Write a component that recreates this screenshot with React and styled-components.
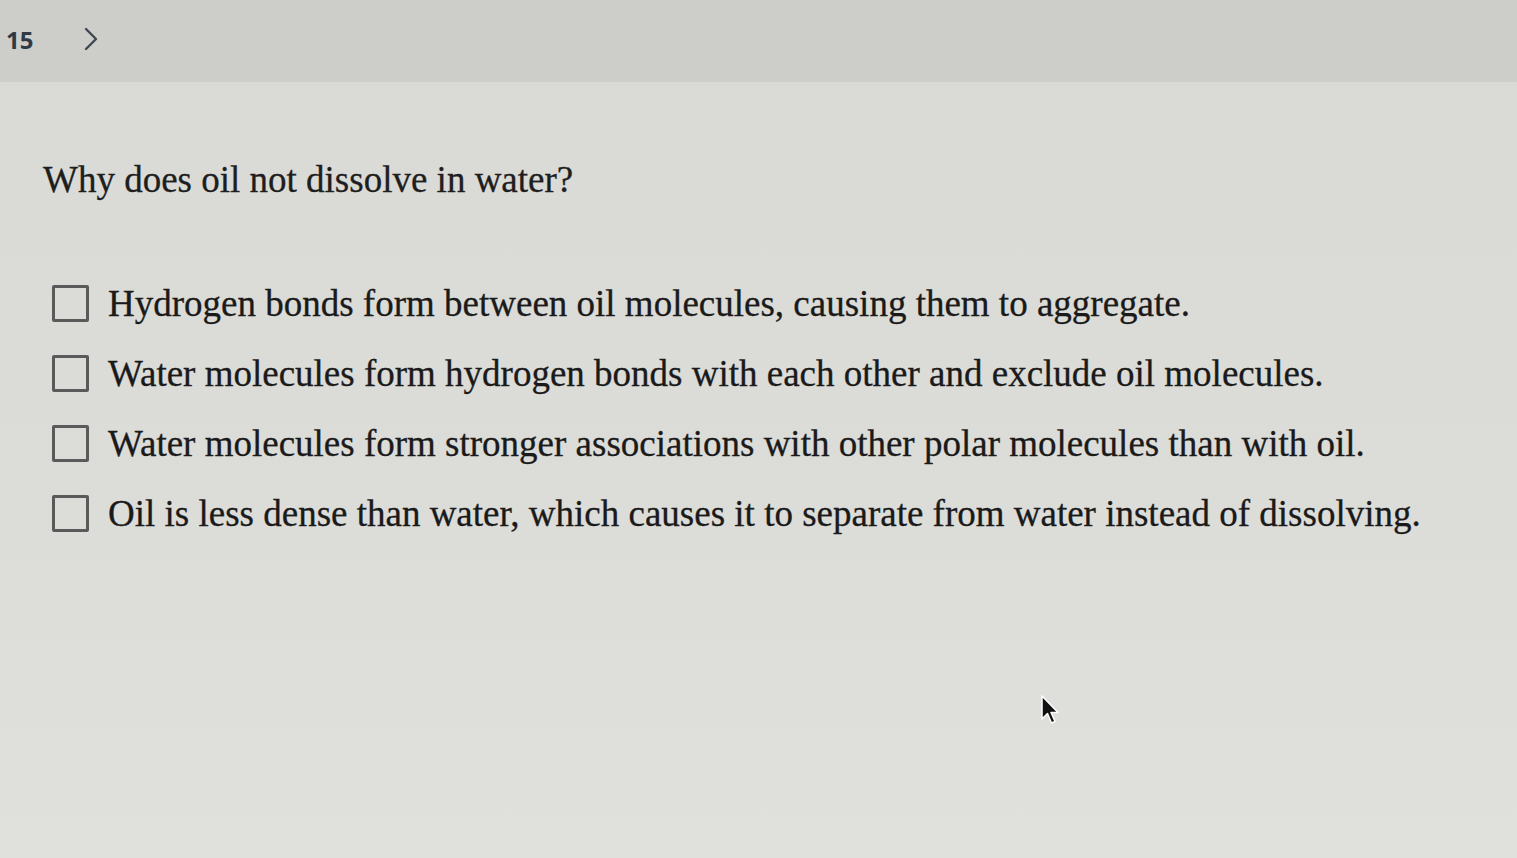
import React from "react";
import styled, { createGlobalStyle } from "styled-components";

const Global = createGlobalStyle`
  html, body { margin: 0; padding: 0; }
  body { background: #dadad6; font-family: "Liberation Serif", "Times New Roman", serif; }
`;

const Page = styled.div`
  position: relative;
  width: 1517px;
  height: 858px;
  overflow: hidden;
  background: linear-gradient(180deg, #d9d9d5 0%, #dcdcd8 60%, #e0e0dc 100%);
`;

const Header = styled.div`
  height: 82px;
  background: #cdcdca;
  display: flex;
  align-items: center;
  padding-left: 6px;
  gap: 50px;
  box-sizing: border-box;
  padding-bottom: 4px;
`;

const Num = styled.span`
  font-family: "Open Sans", "Noto Sans", sans-serif;
  font-weight: 700;
  font-size: 24px;
  color: #2f3a44;
`;

const Content = styled.main`
  padding: 78px 0 0 43px;
`;

const Question = styled.h1`
  margin: 0;
  font-family: "Liberation Serif", serif;
  font-weight: 400;
  font-size: 37px;
  line-height: 40px;
  color: #1e1e1e;
  -webkit-text-stroke: 0.3px #1e1e1e;
`;

const Options = styled.div`
  margin-top: 85px;
  margin-left: 9px;
  display: flex;
  flex-direction: column;
  gap: 33px;
`;

const Option = styled.label`
  display: flex;
  align-items: center;
  gap: 19px;
  font-size: 37px;
  color: #1a1a1a;
  line-height: 36px;
  -webkit-text-stroke: 0.3px #1a1a1a;
`;

const Box = styled.span`
  width: 31px;
  height: 31px;
  border: 3px solid #5a5a5a;
  border-radius: 2px;
  flex: none;
`;

const Cursor = styled.svg`
  position: absolute;
  left: 1040px;
  top: 695px;
`;

const options = [
  "Hydrogen bonds form between oil molecules, causing them to aggregate.",
  "Water molecules form hydrogen bonds with each other and exclude oil molecules.",
  "Water molecules form stronger associations with other polar molecules than with oil.",
  "Oil is less dense than water, which causes it to separate from water instead of dissolving.",
];

export default function App() {
  return (
    <Page>
      <Global />
      <Header>
        <Num>15</Num>
        <svg width="16" height="26" viewBox="0 0 16 26">
          <path d="M3 3 L13 13 L3 23" fill="none" stroke="#3f4750" strokeWidth="2.4" strokeLinecap="round" strokeLinejoin="round" />
        </svg>
      </Header>
      <Content>
        <Question>Why does oil not dissolve in water?</Question>
        <Options>
          {options.map((o) => (
            <Option key={o}>
              <Box />
              {o}
            </Option>
          ))}
        </Options>
      </Content>
      <Cursor width="22" height="32" viewBox="0 0 22 32">
        <path d="M2 1 L2 24 L7.5 18.5 L11.5 28 L15 26.5 L11 17.5 L18 17.5 Z" fill="#111" stroke="#fff" strokeWidth="1.5" strokeLinejoin="round" />
      </Cursor>
    </Page>
  );
}
